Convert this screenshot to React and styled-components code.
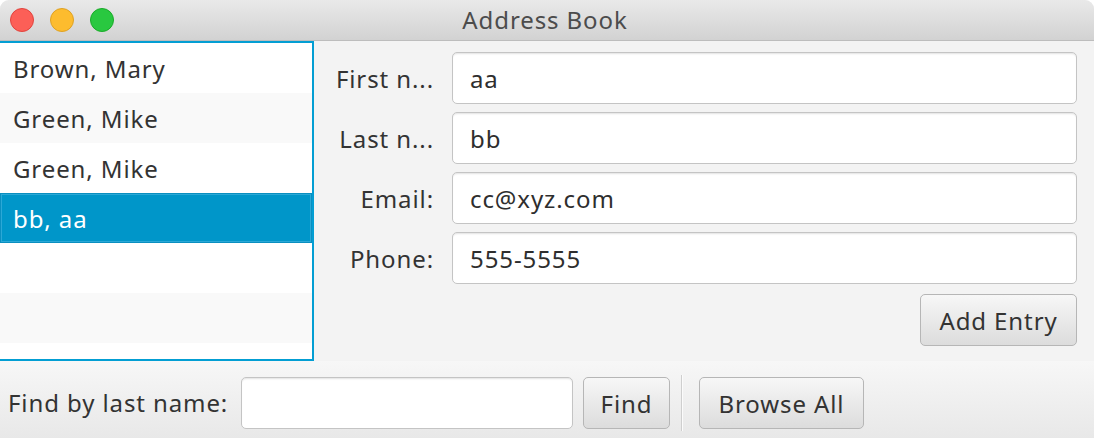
import React from "react";
import styled, { createGlobalStyle } from "styled-components";

const GlobalStyle = createGlobalStyle`
  html, body {
    margin: 0;
    padding: 0;
    background: #ffffff;
  }
  body {
    font-family: "Noto Sans", "Open Sans", sans-serif;
    letter-spacing: 0.9px;
  }
`;

const Window = styled.div`
  width: 1094px;
  height: 438px;
  overflow: hidden;
  border-radius: 9px 9px 0 0;
  background: #f3f3f3;
  display: flex;
  flex-direction: column;
  color: #333333;
`;

const TitleBar = styled.div`
  height: 41px;
  flex: none;
  display: flex;
  align-items: center;
  position: relative;
  background: linear-gradient(#e9e9e9, #d2d2d2);
  border-bottom: 1px solid #bdbdbd;
  box-sizing: border-box;
`;

const Lights = styled.div`
  display: flex;
  gap: 16px;
  padding-left: 10px;
`;

const Light = styled.span`
  width: 24px;
  height: 24px;
  border-radius: 50%;
  box-sizing: border-box;
  background: ${(p) => p.color};
  border: 1px solid ${(p) => p.edge};
`;

const Title = styled.div`
  position: absolute;
  left: 0;
  right: 0;
  top: 4px;
  padding-right: 4px;
  text-align: center;
  font-size: 24px;
  line-height: 32px;
  color: #4c4c4c;
`;

const Main = styled.div`
  display: flex;
  height: 320px;
  flex: none;
`;

const List = styled.div`
  width: 316px;
  margin-left: -2px;
  box-sizing: border-box;
  border: 2px solid #039ed3;
  background: #ffffff;
  overflow: hidden;
`;

const Row = styled.div`
  height: 50px;
  box-sizing: border-box;
  display: flex;
  align-items: center;
  padding-left: 13px;
  font-size: 24px;
  background: ${(p) => (p.selected ? "#0096c9" : p.odd ? "#f9f9f9" : "#ffffff")};
  color: ${(p) => (p.selected ? "#ffffff" : "#333333")};
  box-shadow: ${(p) => (p.selected ? "inset 0 0 0 1px #0a8fc0, inset 0 0 0 2px #2ba8d6" : "none")};
`;

const Form = styled.div`
  flex: 1;
  padding: 11px 17px 0 14px;
  display: flex;
  flex-direction: column;
  align-items: stretch;
  gap: 8px;
`;

const FieldRow = styled.div`
  display: flex;
  align-items: center;
  gap: 18px;
`;

const Label = styled.div`
  width: 106px;
  text-align: right;
  font-size: 24px;
  white-space: nowrap;
`;

const Input = styled.div`
  box-sizing: border-box;
  height: 52px;
  width: ${(p) => p.width || "auto"};
  flex: ${(p) => (p.width ? "none" : 1)};
  border: 1px solid #c4c4c4;
  border-radius: 5px;
  background: #ffffff;
  box-shadow: inset 0 2px 2px -1px #e2e2e2;
  display: flex;
  align-items: center;
  padding-left: 17px;
  font-size: 24px;
  color: #2e2e2e;
`;

const Actions = styled.div`
  display: flex;
  justify-content: flex-end;
  margin-top: 2px;
`;

const Button = styled.button`
  box-sizing: border-box;
  height: 52px;
  width: ${(p) => p.width};
  margin-left: ${(p) => p.gap || "0px"};
  border: 1px solid #b6b6b6;
  border-radius: 5px;
  background: linear-gradient(#f7f7f7, #dcdcdc);
  font-family: inherit;
  letter-spacing: inherit;
  font-size: 24px;
  color: #333333;
  padding: 0;
`;

const BottomBar = styled.div`
  flex: 1;
  display: flex;
  align-items: flex-start;
  padding: 16px 0 0 8px;
  background: linear-gradient(#f7f7f7, #e8e8e8);
`;

const FindLabel = styled.span`
  width: 223px;
  flex: none;
  white-space: nowrap;
  font-size: 24px;
  line-height: 52px;
  margin-right: 10px;
`;

const Separator = styled.div`
  width: 2px;
  height: 56px;
  margin: -2px 16px 0 11px;
  border-left: 1px solid #cfcfcf;
  border-right: 1px solid #fbfbfb;
  box-sizing: border-box;
`;

const names = ["Brown, Mary", "Green, Mike", "Green, Mike", "bb, aa", "", "", ""];

const fields = [
  ["First n...", "aa"],
  ["Last n...", "bb"],
  ["Email:", "cc@xyz.com"],
  ["Phone:", "555-5555"],
];

const App = () => {
  return (
    <>
      <GlobalStyle />
      <Window>
        <TitleBar>
          <Lights>
            <Light color="#fc5f57" edge="#e0443e" />
            <Light color="#fdbc2e" edge="#dea123" />
            <Light color="#29c840" edge="#1aab29" />
          </Lights>
          <Title>Address Book</Title>
        </TitleBar>
        <Main>
          <List>
            {names.map((n, i) => (
              <Row key={i} odd={i % 2 === 1} selected={i === 3}>
                {n}
              </Row>
            ))}
          </List>
          <Form>
            {fields.map(([label, value]) => (
              <FieldRow key={label}>
                <Label>{label}</Label>
                <Input>{value}</Input>
              </FieldRow>
            ))}
            <Actions>
              <Button width="157px">Add Entry</Button>
            </Actions>
          </Form>
        </Main>
        <BottomBar>
          <FindLabel>Find by last name:</FindLabel>
          <Input width="332px" />
          <Button width="87px" gap="10px">
            Find
          </Button>
          <Separator />
          <Button width="165px">Browse All</Button>
        </BottomBar>
      </Window>
    </>
  );
};

export default App;
